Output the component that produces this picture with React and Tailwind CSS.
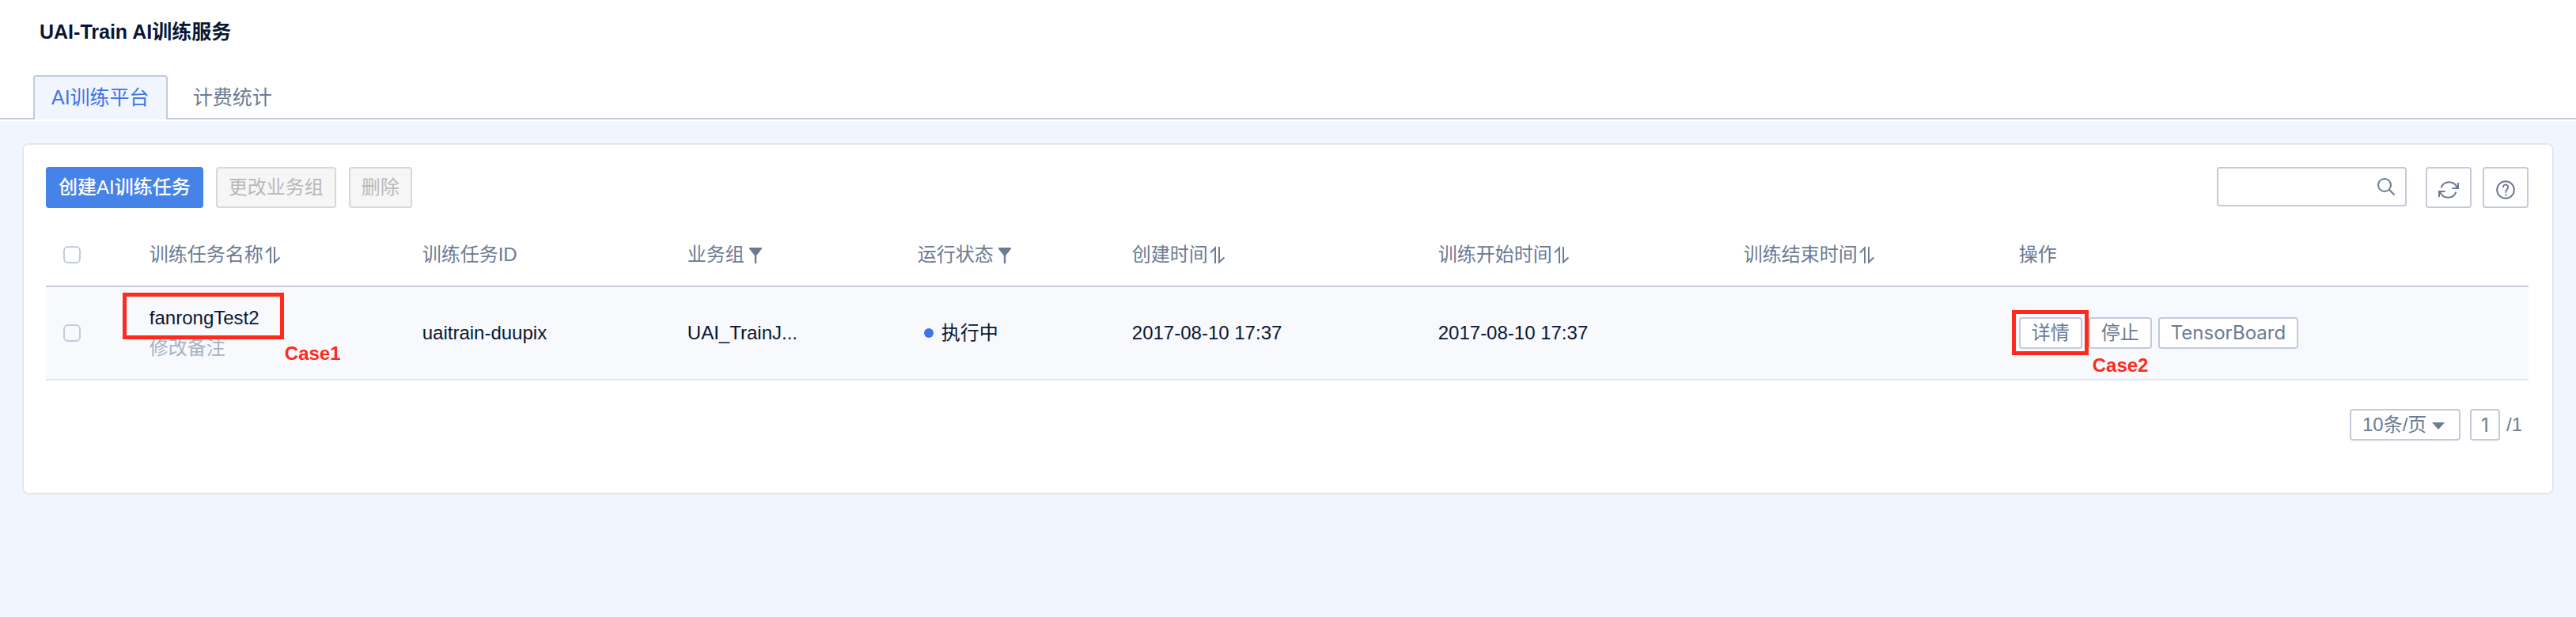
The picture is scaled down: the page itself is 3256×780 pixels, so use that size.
import React from "react";

const SortIcon = () => (
  <svg className="ml-0.5 h-6 w-5 shrink-0" viewBox="0 0 20 24" fill="none" stroke="currentColor" strokeWidth="2" aria-hidden="true">
    <path d="M1 9.5 L7 3.5 V23" />
    <path d="M12 2 V21.5 L18.5 15.5" />
  </svg>
);

const FilterIcon = () => (
  <svg className="ml-1.5 h-6 w-4 shrink-0" viewBox="0 0 16 24" fill="currentColor" aria-hidden="true">
    <path d="M0 3 H16 V4.5 L9.2 13 V23 H6.8 V13 L0 4.5 Z" />
  </svg>
);

const SearchIcon = () => (
  <svg className="h-6 w-6" viewBox="0 0 24 24" fill="none" stroke="currentColor" strokeWidth="2" aria-hidden="true">
    <circle cx="10" cy="10" r="8" />
    <path d="M15.8 15.8 L22.5 22.5" />
  </svg>
);

const RefreshIcon = () => (
  <svg className="h-6 w-7" viewBox="0 0 28 24" fill="none" stroke="currentColor" strokeWidth="2" aria-hidden="true">
    <path d="M4.6 9.4 A10.7 10.7 0 0 1 24.8 9.6" />
    <path d="M26 3 V10 H18.5" />
    <path d="M23.4 14.6 A10.7 10.7 0 0 1 3.2 14.4" />
    <path d="M2 21 V14 H9.5" />
  </svg>
);

const HelpIcon = () => (
  <svg className="h-6 w-6" viewBox="0 0 24 24" fill="none" stroke="currentColor" strokeWidth="2" aria-hidden="true">
    <circle cx="12" cy="12" r="10.8" />
    <path d="M8.8 9 A3.2 3.2 0 1 1 13.9 11.2 Q12.4 12.4 12.4 14 V15.8" />
    <path d="M12.4 17.6 V19.6" />
  </svg>
);

const columns = [
  { label: "训练任务名称", width: "w-[10.99%]", Icon: SortIcon },
  { label: "训练任务ID", width: "w-[10.68%]" },
  { label: "业务组", width: "w-[9.27%]", Icon: FilterIcon },
  { label: "运行状态", width: "w-[8.64%]", Icon: FilterIcon },
  { label: "创建时间", width: "w-[12.33%]", Icon: SortIcon },
  { label: "训练开始时间", width: "w-[12.3%]", Icon: SortIcon },
  { label: "训练结束时间", width: "w-[11.09%]", Icon: SortIcon },
  { label: "操作", width: "" },
];

const Checkbox = ({ label }) => (
  <input
    type="checkbox"
    aria-label={label}
    className="ml-[22px] block h-[22px] w-[22px] appearance-none rounded-md border-2 border-[#c2cadb] checked:bg-[#4683e8]"
  />
);

const actionClass =
  "h-10 rounded border-2 border-[#c2cadb] bg-white px-3.5 font-['Inter','Noto_Sans_CJK_SC',sans-serif] text-2xl leading-9";
const toolClass =
  "flex h-[52px] w-[58px] items-center justify-center rounded border-2 border-[#c2cadb] bg-white pt-1.5";
const disabledClass =
  "h-[52px] rounded border-2 border-[#d8d8d8] bg-[#f6f6f6] px-3.5 text-[#b9b9b9]";

export default function App() {
  return (
    <div className="min-h-screen bg-[#f1f5fe] font-['Liberation_Sans','Noto_Sans_CJK_SC',sans-serif] text-2xl text-[#0a1633]">
      <header className="bg-white pb-0.5">
        <h1 className="px-[50px] pt-6 text-[25px] leading-8 font-bold">UAI-Train AI训练服务</h1>
        <nav className="mt-[39px] flex gap-2 border-b-2 border-[#c2cadb] pl-[42px] text-[25px] leading-[52px]">
          <a href="#train" className="-mb-0.5 rounded-t border-2 border-b-0 border-[#c2cadb] bg-[#f1f5fe] px-[21px] pb-0.5 text-[#3f74e6]">
            AI训练平台
          </a>
          <a href="#billing" className="px-6 pt-0.5 text-[#6b7b93]">计费统计</a>
        </nav>
      </header>

      <main className="m-7 rounded-lg border-2 border-[#e1e6f0] bg-white pt-7 pr-[30px] pb-[66px] pl-7 text-[#6b7b93]">
        <div className="flex items-start justify-between">
          <div className="flex gap-4">
            <button type="button" className="h-[52px] rounded bg-[#4683e8] px-4 font-medium text-white">
              创建AI训练任务
            </button>
            <button type="button" disabled className={disabledClass}>更改业务组</button>
            <button type="button" disabled className={disabledClass}>删除</button>
          </div>
          <div className="flex items-start">
            <label className="flex h-[50px] w-60 items-center rounded border-2 border-[#c2cadb] bg-white pr-3">
              <input type="text" aria-label="搜索" className="min-w-0 flex-1 bg-transparent px-3 outline-none" />
              <SearchIcon />
            </label>
            <button type="button" aria-label="刷新" className={`ml-6 ${toolClass}`}><RefreshIcon /></button>
            <button type="button" aria-label="帮助" className={`ml-3.5 ${toolClass}`}><HelpIcon /></button>
          </div>
        </div>

        <table className="mt-5 w-full table-fixed border-separate border-spacing-0 text-left">
          <thead>
            <tr>
              <th className="h-20 w-[4.17%] border-b-2 border-[#c2cadb] p-0"><Checkbox label="全选" /></th>
              {columns.map(({ label, width, Icon }) => (
                <th key={label} scope="col" className={`h-20 border-b-2 border-[#c2cadb] p-0 font-normal ${width}`}>
                  <div className="flex items-center leading-9">
                    {label}
                    {Icon && <Icon />}
                  </div>
                </th>
              ))}
            </tr>
          </thead>
          <tbody className="text-[#0a1633] [&_td]:h-[118px] [&_td]:border-b-2 [&_td]:border-[#e1e6f0] [&_td]:bg-[#f7f9fd] [&_td]:p-0">
            <tr>
              <td><Checkbox label="选择 fanrongTest2" /></td>
              <td>
                <div className="relative leading-[38px]">
                  <div>fanrongTest2</div>
                  <div className="text-[#a8b2c3]">修改备注</div>
                  <div className="absolute -top-[13px] -left-[34px] h-[59px] w-[204px] border-5 border-[#ff2a1b]" />
                  <div className="absolute top-[45px] left-[171px] font-bold text-[#ff2a1b]">Case1</div>
                </div>
              </td>
              <td>uaitrain-duupix</td>
              <td>UAI_TrainJ...</td>
              <td>
                <div className="flex items-center gap-2.5 pl-2">
                  <span className="h-3 w-3 rounded-full bg-[#3f74e6]" />
                  执行中
                </div>
              </td>
              <td>2017-08-10 17:37</td>
              <td>2017-08-10 17:37</td>
              <td />
              <td>
                <div className="relative flex gap-2 text-[#6b7b93]">
                  <button type="button" className={actionClass}>详情</button>
                  <button type="button" className={actionClass}>停止</button>
                  <button type="button" className={actionClass}>TensorBoard</button>
                  <div className="absolute -top-[9px] -left-[9px] h-[57px] w-[97px] border-5 border-[#ff2a1b]" />
                  <div className="absolute top-[45px] left-[93px] font-bold text-[#ff2a1b]">Case2</div>
                </div>
              </td>
            </tr>
          </tbody>
        </table>

        <div className="mt-9 flex items-center justify-end pr-2">
          <div className="relative">
            <select aria-label="每页条数" className="block h-10 w-[140px] appearance-none rounded border-2 border-[#c2cadb] bg-white pl-3.5 leading-9">
              <option>10条/页</option>
            </select>
            <svg className="pointer-events-none absolute top-[17px] right-5 h-[9px] w-4" viewBox="0 0 16 9" fill="currentColor" aria-hidden="true">
              <path d="M0 0 H16 L8 9 Z" />
            </svg>
          </div>
          <input
            type="text"
            aria-label="页码"
            defaultValue="1"
            className="ml-3 h-10 w-[38px] rounded border-2 border-[#c2cadb] bg-white text-center font-['Inter',sans-serif]"
          />
          <span className="ml-2">/1</span>
        </div>
      </main>
    </div>
  );
}
